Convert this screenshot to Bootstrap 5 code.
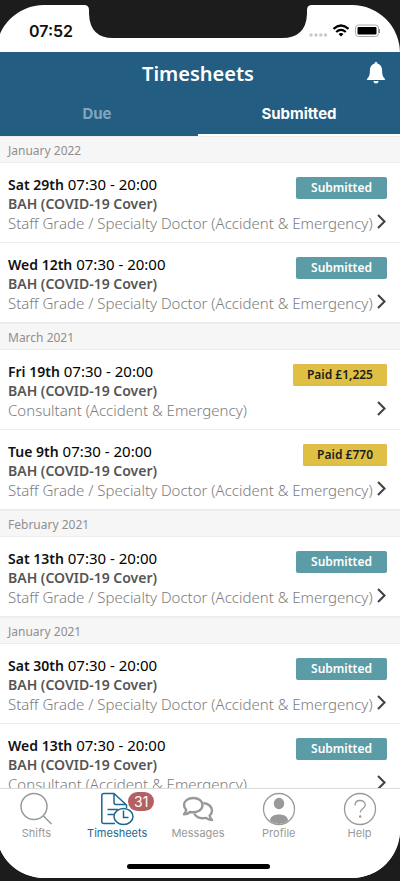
<!DOCTYPE html>
<html lang="en">
<head>
<meta charset="utf-8">
<meta name="viewport" content="width=device-width, initial-scale=1">
<title>Timesheets</title>
<link href="https://cdn.jsdelivr.net/npm/bootstrap@5.3.0/dist/css/bootstrap.min.css" rel="stylesheet">
<style>
body { background: #1c1c1c; font-family: "Noto Sans", "Open Sans", sans-serif; color: #111; }
.phone { height: 100vh; padding: 5px 0 3px; }
.screen { margin-left: -4px; border-radius: 48px; }
.system-font { font-family: Inter, "Liberation Sans", sans-serif; }
.status-bar { height: 47px; padding: 0 20px 0 33px; }
.clock { font-size: 16px; line-height: 20px; padding-top: 5px; }
.notch { top: 0; left: 50%; transform: translateX(-50%); }
.app-head { background: #245d82; }
.title-bar { height: 44px; }
.title-bar h1 { font-size: 20px; line-height: 28px; font-weight: 600; }
.bell { right: 14px; top: 9px; line-height: 0; }
.tabs .nav-link { font-size: 15px; line-height: 20px; padding: 8px 0 10px; font-weight: 700; color: #7fa6bd; border-bottom: 2px solid #245d82; border-radius: 0; }
.tabs .nav-link.active { color: #fff; border-bottom-color: #fff; }
.month { height: 27px; font-size: 12px; line-height: 27px; padding: 0 12px; background: #f6f6f6; color: #8f8f8f; border-top: 1px solid #ececec; border-bottom: 1px solid #ececec; font-weight: 400; }
.shift { height: 80px; padding: 11px 12px 9px; line-height: 20px; font-size: 15px; color: #111; text-decoration: none; border-bottom: 1px solid #ececec; }
.shift:last-child { border-bottom: 0; }
.shift b { font-weight: 600; font-size: 14px; }
.shift .hours { color: #000; }
.place { font-weight: 600; font-size: 14px; color: #555; line-height: 18px; }
.grade { font-weight: 300; color: #7c7c7c; white-space: nowrap; }
.state { top: 14px; right: 13px; font-size: 12px; line-height: 22px; padding: 0 15px; border-radius: 2px; font-weight: 600; color: #fff; background: #5b9ca6; }
.state.paid { padding: 0 14px; color: #1c1c1c; background: #dfc043; box-shadow: inset 0 0 0 1px #e5b552; }
.chevron { right: 14px; top: 51px; }
.tab-bar { height: 90px; border-top: 1px solid #dcdcdc; padding-top: 3px; }
.tab-bar a { color: #999; text-decoration: none; font-size: 11px; line-height: 15px; }
.tab-bar a.active { color: #1d6791; }
.tab-bar svg { display: block; margin: 0 auto; }
.count { left: 50%; top: 0; margin-left: 11px; min-width: 26px; font-size: 14px; line-height: 19px; border-radius: 10px; background: #b46062; color: #fff; }
.home-line { bottom: 9px; left: 50%; width: 143px; height: 5px; margin-left: -71px; border-radius: 3px; background: #000; }
</style>
<script src="https://cdn.jsdelivr.net/npm/bootstrap@5.3.0/dist/js/bootstrap.bundle.min.js"></script>
</head>
<body>
<svg class="d-none" aria-hidden="true"><symbol id="chev" viewBox="0 0 9 15"><path d="M1 1l6.500 6.500L1 14" fill="none" stroke="#444" stroke-width="2.100"/></symbol></svg>
<div class="phone overflow-hidden">
<div class="screen bg-white h-100 overflow-hidden position-relative d-flex flex-column">
  <div class="status-bar system-font d-flex align-items-center justify-content-between position-relative flex-shrink-0">
    <span class="clock fw-semibold">07:52</span>
    <svg class="notch position-absolute" width="228" height="33" viewBox="0 0 228 33" aria-hidden="true"><path d="M0 0Q5 0 5 5V9Q6 33 29 33H198Q222 33 223 9V5Q223 0 228 0Z" fill="#1c1c1c"/></svg>
    <svg class="mt-1" width="72" height="14" viewBox="0 0 72 14" aria-label="Wi-Fi, battery full" role="img">
      <g fill="#c9c9c9"><circle cx="3" cy="11" r="1.700"/><circle cx="8" cy="11" r="1.700"/><circle cx="12.800" cy="11" r="1.700"/><circle cx="17.500" cy="11" r="1.700"/></g>
      <g fill="none" stroke="#000" stroke-width="2.200"><path d="M25.500 4.800Q33 -1.800 40.500 4.800M28.200 8Q33 3.800 37.800 8"/></g><path d="M30.500 10Q33 8 35.500 10L33 12.500Z"/>
      <rect x="47.500" y="1" width="23" height="11.500" rx="3" fill="#fff" stroke="#aaa"/><rect x="49.500" y="3" width="19" height="7.500" rx="1"/><path d="M71.500 5v4" stroke="#888"/>
    </svg>
  </div>
  <header class="app-head flex-shrink-0">
    <div class="title-bar position-relative d-flex align-items-center justify-content-center text-white">
      <h1 class="m-0">Timesheets</h1>
      <button class="bell btn p-0 border-0 position-absolute" aria-label="Notifications"><svg width="20" height="24" viewBox="0 0 20 24" fill="#fff"><path d="M10 1C9 1 8.600 1.700 8.600 2.600C5.400 3.300 3.900 6 3.900 9.400C3.900 14.500 2.600 16.200 1.200 17.600C.6 18.300.9 19 1.700 19H18.300C19.100 19 19.400 18.300 18.800 17.600C17.400 16.200 16.100 14.500 16.100 9.400C16.100 6 14.600 3.300 11.400 2.600C11.400 1.700 11 1 10 1ZM7.300 20H12.700Q12.200 22.500 10 22.500T7.300 20Z"/></svg></button>
    </div>
    <nav class="tabs nav nav-justified system-font">
      <a class="nav-link" href="#due">Due</a>
      <a class="nav-link active" href="#submitted" aria-current="page">Submitted</a>
    </nav>
  </header>
  <main class="flex-grow-1 overflow-hidden">
    <h2 class="month m-0">January 2022</h2>
    <a class="shift d-block position-relative" href="#s1"><div><b>Sat 29th</b> <span class="hours">07:30 - 20:00</span></div><div class="place">BAH (COVID-19 Cover)</div><div class="grade">Staff Grade / Specialty Doctor (Accident &amp; Emergency)</div><span class="state position-absolute">Submitted</span><svg class="chevron position-absolute" width="9" height="15"><use href="#chev"/></svg></a>
    <a class="shift d-block position-relative" href="#s2"><div><b>Wed 12th</b> <span class="hours">07:30 - 20:00</span></div><div class="place">BAH (COVID-19 Cover)</div><div class="grade">Staff Grade / Specialty Doctor (Accident &amp; Emergency)</div><span class="state position-absolute">Submitted</span><svg class="chevron position-absolute" width="9" height="15"><use href="#chev"/></svg></a>
    <h2 class="month m-0">March 2021</h2>
    <a class="shift d-block position-relative" href="#s3"><div><b>Fri 19th</b> <span class="hours">07:30 - 20:00</span></div><div class="place">BAH (COVID-19 Cover)</div><div class="grade">Consultant (Accident &amp; Emergency)</div><span class="state paid position-absolute">Paid £1,225</span><svg class="chevron position-absolute" width="9" height="15"><use href="#chev"/></svg></a>
    <a class="shift d-block position-relative" href="#s4"><div><b>Tue 9th</b> <span class="hours">07:30 - 20:00</span></div><div class="place">BAH (COVID-19 Cover)</div><div class="grade">Staff Grade / Specialty Doctor (Accident &amp; Emergency)</div><span class="state paid position-absolute">Paid £770</span><svg class="chevron position-absolute" width="9" height="15"><use href="#chev"/></svg></a>
    <h2 class="month m-0">February 2021</h2>
    <a class="shift d-block position-relative" href="#s5"><div><b>Sat 13th</b> <span class="hours">07:30 - 20:00</span></div><div class="place">BAH (COVID-19 Cover)</div><div class="grade">Staff Grade / Specialty Doctor (Accident &amp; Emergency)</div><span class="state position-absolute">Submitted</span><svg class="chevron position-absolute" width="9" height="15"><use href="#chev"/></svg></a>
    <h2 class="month m-0">January 2021</h2>
    <a class="shift d-block position-relative" href="#s6"><div><b>Sat 30th</b> <span class="hours">07:30 - 20:00</span></div><div class="place">BAH (COVID-19 Cover)</div><div class="grade">Staff Grade / Specialty Doctor (Accident &amp; Emergency)</div><span class="state position-absolute">Submitted</span><svg class="chevron position-absolute" width="9" height="15"><use href="#chev"/></svg></a>
    <a class="shift d-block position-relative" href="#s7"><div><b>Wed 13th</b> <span class="hours">07:30 - 20:00</span></div><div class="place">BAH (COVID-19 Cover)</div><div class="grade">Consultant (Accident &amp; Emergency)</div><span class="state position-absolute">Submitted</span><svg class="chevron position-absolute" width="9" height="15"><use href="#chev"/></svg></a>
  </main>
  <nav class="tab-bar system-font d-flex flex-shrink-0 text-center bg-white position-relative">
    <a class="col" href="#shifts"><svg width="34" height="34" viewBox="0 0 34 34" fill="none" stroke="#999" stroke-width="1.500"><circle cx="15" cy="14.500" r="13"/><path d="M24 23.500l8.500 8.500"/></svg>Shifts</a>
    <a class="col active position-relative" href="#timesheets"><svg width="34" height="34" viewBox="0 0 34 34" fill="none" stroke="#1d6791" stroke-width="1.500"><path d="M15 31.500H4Q1.800 31.500 1.800 29.500V3.500Q1.800 1.500 4 1.500H14L26.500 13V16M14 1.500V10.500Q14 12.500 16 12.500H26M7.500 17.500H18M7.500 22.500H14"/><ellipse cx="23.500" cy="24.500" rx="9.500" ry="8"/><path d="M23.500 18.500V25.500H28.500"/></svg>Timesheets<span class="count position-absolute">31</span></a>
    <a class="col" href="#messages"><svg width="34" height="34" viewBox="0 0 34 34" fill="none" stroke="#999" stroke-width="2.400" stroke-linejoin="round"><path d="M12.500 6C6.500 6 3 9.400 3 13C3 15 4 16.600 5.200 17.800C5 19.600 4 21 3 22.300C5.500 22.300 7.500 21.400 9 20C16.500 21.300 21.500 17.700 21.500 13C21.500 9 17.500 6 12.500 6Z"/><path d="M22.500 11C27.500 11.500 31 14.700 31 18.500C31 20.600 30 22.300 28.600 23.600C28.800 25.500 30 26.800 31 28C28.400 28 26.400 27 25 25.900C19.500 27 15 25 13.200 21.500"/></svg>Messages</a>
    <a class="col" href="#profile"><svg width="34" height="34" viewBox="0 0 34 34"><circle cx="17" cy="17" r="15.500" fill="none" stroke="#999" stroke-width="1.300"/><ellipse cx="17" cy="11.500" rx="5.200" ry="5.700" fill="#999"/><path d="M8 29C8 24.500 12 22.500 17 22.500S26 24.500 26 29Q17 35 8 29Z" fill="#999"/></svg>Profile</a>
    <a class="col" href="#help"><svg width="34" height="34" viewBox="0 0 34 34" fill="none" stroke="#999" stroke-width="1.300"><circle cx="17" cy="17" r="15.500"/><path d="M12 13.500C12 10.200 14 8.500 17 8.500S22.300 10.300 22.300 13C22.300 16.500 17.200 16.500 17.200 20.500"/><circle cx="17.200" cy="24.500" r=".6" fill="#999"/></svg>Help</a>
    <div class="home-line position-absolute"></div>
  </nav>
</div>
</div>
</body>
</html>
